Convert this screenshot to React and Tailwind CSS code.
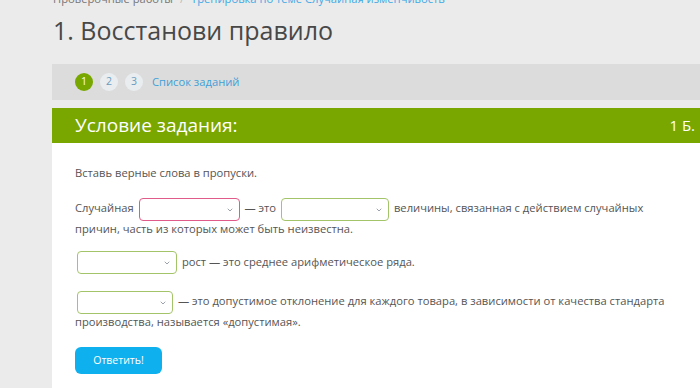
import { ChevronDown } from "lucide-react";

const Select = ({ width, border }) => (
  <span
    className={`relative inline-block h-[23px] -my-[2px] mx-[2px] align-middle rounded-[4px] border bg-white ${border} ${width}`}
  >
    <ChevronDown
      className="absolute right-[5px] top-[7px] w-[8px] h-[8px] text-gray-500"
      strokeWidth={2}
    />
  </span>
);

const App = () => {
  return (
    <div
      className="w-[700px] h-[388px] overflow-hidden bg-[#ebebeb] text-[#555]"
      style={{ fontFamily: '"Open Sans", "Noto Sans", sans-serif' }}
    >
      <div className="pl-[53px]">
        {/* BREADCRUMB */}
        <div className="-mt-[10px] h-[17px] text-[11.2px] leading-[17px] whitespace-nowrap">
          <span className="text-[#777]">Проверочные работы</span>
          <span className="text-[#bbb] mx-[7px]">/</span>
          <span className="text-[#3fa9e6]">
            Тренировка по теме Случайная изменчивость
          </span>
        </div>

        {/* TITLE */}
        <h1 className="mt-[5px] text-[25px] leading-[36px] text-[#484848] font-normal">
          1. Восстанови правило
        </h1>
      </div>

      <div className="ml-[52px] mt-[16px]">
        {/* TASK NAV */}
        <div className="h-[36px] bg-[#dcdcdc] flex items-center pl-[23px] gap-[7px] text-[10.5px]">
          <span className="w-[18px] h-[18px] rounded-full bg-[#78a700] text-white flex items-center justify-center">
            1
          </span>
          <span className="w-[18px] h-[18px] rounded-full bg-[#e9edef] text-[#6a9cc0] flex items-center justify-center">
            2
          </span>
          <span className="w-[18px] h-[18px] rounded-full bg-[#e9edef] text-[#6a9cc0] flex items-center justify-center">
            3
          </span>
          <span className="ml-[2px] text-[11.2px] text-[#3fa0d8]">
            Список заданий
          </span>
        </div>

        {/* HEADER */}
        <div className="mt-[8px] h-[35px] bg-[#7aa600] flex items-center justify-between pl-[23px] pr-[5px] text-white">
          <span className="text-[19px]">Условие задания:</span>
          <span className="text-[15px]">1 Б.</span>
        </div>

        {/* BODY */}
        <div className="bg-white h-[260px] pl-[23px] pr-[22px] pt-[20px] text-[11.2px] leading-[20px] text-[#555]">
          <p>Вставь верные слова в пропуски.</p>

          <p className="mt-[15px]">
            Случайная <Select width="w-[101px]" border="border-[#e05a8a]" />{" "}
            — это <Select width="w-[108px]" border="border-[#a4c46a]" />{" "}
            величины, связанная с действием случайных причин, часть из которых
            может быть неизвестна.
          </p>

          <p className="mt-[13px]">
            <Select width="w-[100px]" border="border-[#a4c46a]" /> рост — это
            среднее арифметическое ряда.
          </p>

          <p className="mt-[19px]">
            <Select width="w-[96px]" border="border-[#a4c46a]" /> — это
            допустимое отклонение для каждого товара, в зависимости от качества
            стандарта производства, называется «допустимая».
          </p>

          <button className="mt-[15px] h-[27px] w-[87px] rounded-[6px] bg-[#0fb0ee] text-white text-[10.5px]">
            Ответить!
          </button>
        </div>
      </div>
    </div>
  );
};

export default App;
